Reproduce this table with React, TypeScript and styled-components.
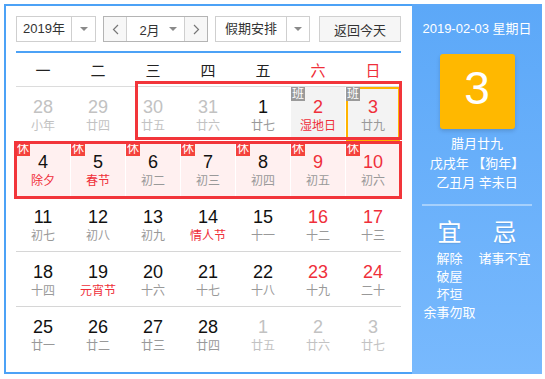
import React from 'react';
import styled, { createGlobalStyle } from 'styled-components';

const Global = createGlobalStyle`
  html, body { margin: 0; padding: 0; background: #fff; }
  body { font-family: "Liberation Sans", "Noto Sans CJK SC", sans-serif; }
`;

const BLUE = '#4ca2f6';
const RED = '#ef2f3a';

const Widget = styled.div`
  display: flex;
  margin: 4px;
  width: 538px;
  height: 370px;
`;

const Main = styled.div`
  box-sizing: border-box;
  width: 408px;
  height: 370px;
  border: 2px solid ${BLUE};
  border-right: none;
  padding: 10px 11px 0 10px;
`;

const Toolbar = styled.div`
  display: flex;
  height: 26px;
  font-size: 13px;
  color: #333;
`;

const Select = styled.div<{ $w: number; $ml: number; $divider?: boolean }>`
  box-sizing: border-box;
  width: ${(p) => p.$w}px;
  margin-left: ${(p) => p.$ml}px;
  border: 1px solid #cfcfcf;
  display: flex;
  background: #fff;
`;

const SelectLabel = styled.div`
  flex: 1;
  display: flex;
  align-items: center;
  justify-content: center;
  line-height: 24px;
`;

const ArrowBox = styled.div<{ $divider?: boolean; $w?: number }>`
  width: ${(p) => p.$w ?? 23}px;
  border-left: ${(p) => (p.$divider ? '1px solid #cfcfcf' : 'none')};
  display: flex;
  align-items: center;
  justify-content: center;
`;

const Triangle = styled.span`
  width: 0;
  height: 0;
  border-left: 4px solid transparent;
  border-right: 4px solid transparent;
  border-top: 4px solid #8a8a8a;
`;

const MonthGroup = styled.div`
  box-sizing: border-box;
  width: 105px;
  margin-left: 7px;
  border: 1px solid #b4b4b4;
  display: flex;
`;

const NavBtn = styled.div<{ $side: 'l' | 'r' }>`
  width: 22px;
  background: #f7f7f7;
  ${(p) => (p.$side === 'l' ? 'border-right: 1px solid #cfcfcf;' : 'border-left: 1px solid #cfcfcf;')}
  display: flex;
  align-items: center;
  justify-content: center;
`;

const MonthSel = styled.div`
  flex: 1;
  display: flex;
  align-items: center;
  padding-left: 10px;
`;

const MonthText = styled.span`
  flex: 1;
  text-align: center;
`;

const ReturnBtn = styled.div`
  box-sizing: border-box;
  width: 82px;
  margin-left: 9px;
  border: 1px solid #d0d0d0;
  background: #f6f6f6;
  display: flex;
  align-items: center;
  justify-content: center;
`;

const BlueLine = styled.div`
  margin-top: 9px;
  height: 2px;
  background: ${BLUE};
`;

const WeekHead = styled.div`
  display: grid;
  grid-template-columns: repeat(7, 54px);
  column-gap: 1px;
  height: 33px;
  align-items: center;
  border-bottom: 1px solid #dcdcdc;
  font-size: 15px;
`;

const WeekName = styled.div<{ $red?: boolean }>`
  text-align: center;
  color: ${(p) => (p.$red ? RED : '#222')};
`;

const Body = styled.div`
  position: relative;
`;

const Row = styled.div<{ $last?: boolean }>`
  display: grid;
  grid-template-columns: repeat(7, 54px);
  column-gap: 1px;
  height: 54px;
  border-bottom: ${(p) => (p.$last ? 'none' : '1px solid #d6d6d6')};
`;

type Kind = 'none' | 'work' | 'rest';

const Cell = styled.div<{ $kind: Kind; $today?: boolean }>`
  position: relative;
  box-sizing: border-box;
  text-align: center;
  padding-top: 10px;
  background: ${(p) => (p.$kind === 'work' ? '#f3f3f3' : p.$kind === 'rest' ? '#fff0f0' : 'transparent')};
  box-shadow: ${(p) => (p.$today ? 'inset 0 0 0 2px #ffb400' : 'none')};
`;

const Num = styled.div<{ $color: string }>`
  font-size: 18px;
  line-height: 20px;
  color: ${(p) => p.$color};
`;

const Lunar = styled.div<{ $color: string }>`
  margin-top: 1px;
  font-size: 12px;
  line-height: 16px;
  color: ${(p) => p.$color};
`;

const Badge = styled.span<{ $rest?: boolean }>`
  position: absolute;
  left: 0;
  top: 0;
  width: 14px;
  height: 14px;
  font-size: 12px;
  line-height: 14px;
  text-align: center;
  color: #fff;
  background: ${(p) => (p.$rest ? '#f4433c' : '#9a9a9a')};
`;

const Mark = styled.div<{ $l: number; $t: number; $w: number; $h: number }>`
  position: absolute;
  box-sizing: border-box;
  left: ${(p) => p.$l}px;
  top: ${(p) => p.$t}px;
  width: ${(p) => p.$w}px;
  height: ${(p) => p.$h}px;
  border: 3px solid #f2353a;
  pointer-events: none;
`;

const Side = styled.div`
  box-sizing: border-box;
  width: 130px;
  height: 370px;
  background: linear-gradient(#5ca8f8, #78b9fd);
  color: #fff;
  display: flex;
  flex-direction: column;
  align-items: center;
  padding-top: 15px;
`;

const DateLine = styled.div`
  font-size: 13px;
  line-height: 20px;
`;

const DayBox = styled.div`
  margin-top: 15px;
  width: 75px;
  height: 75px;
  border-radius: 3px;
  background: #ffb800;
  box-shadow: 0 2px 4px rgba(0, 0, 0, 0.15);
  display: flex;
  align-items: center;
  justify-content: center;
  padding-bottom: 8px;
  box-sizing: border-box;
  font-size: 46px;
`;

const InfoLines = styled.div`
  margin-top: 5px;
  font-size: 13px;
  line-height: 19.5px;
  text-align: center;
`;

const Sep = styled.div`
  margin-top: 11px;
  width: 110px;
  height: 2px;
  background: rgba(255, 255, 255, 0.4);
`;

const YiJi = styled.div`
  margin-top: 13px;
  display: grid;
  grid-template-columns: 55px 55px;
  text-align: center;
`;

const YiJiTitle = styled.div`
  font-size: 24px;
  line-height: 28px;
  text-shadow: 0 1px 1px rgba(0, 0, 0, 0.1);
`;

const YiJiList = styled.div`
  margin-top: 3px;
  font-size: 13px;
  line-height: 18px;
  white-space: nowrap;
`;

const Chevron = ({ dir }: { dir: 'l' | 'r' }) => (
  <svg width="7" height="11" viewBox="0 0 7 11">
    <polyline
      points={dir === 'l' ? '6,1 1.5,5.5 6,10' : '1,1 5.5,5.5 1,10'}
      fill="none"
      stroke="#777"
      strokeWidth="1.2"
    />
  </svg>
);

type Day = {
  n: number;
  l: string;
  other?: boolean;
  red?: boolean;
  fest?: boolean;
  kind?: Kind;
  today?: boolean;
};

const rows: Day[][] = [
  [
    { n: 28, l: '小年', other: true },
    { n: 29, l: '廿四', other: true },
    { n: 30, l: '廿五', other: true },
    { n: 31, l: '廿六', other: true },
    { n: 1, l: '廿七' },
    { n: 2, l: '湿地日', red: true, fest: true, kind: 'work' },
    { n: 3, l: '廿九', red: true, kind: 'work', today: true },
  ],
  [
    { n: 4, l: '除夕', fest: true, kind: 'rest' },
    { n: 5, l: '春节', fest: true, kind: 'rest' },
    { n: 6, l: '初二', kind: 'rest' },
    { n: 7, l: '初三', kind: 'rest' },
    { n: 8, l: '初四', kind: 'rest' },
    { n: 9, l: '初五', red: true, kind: 'rest' },
    { n: 10, l: '初六', red: true, kind: 'rest' },
  ],
  [
    { n: 11, l: '初七' },
    { n: 12, l: '初八' },
    { n: 13, l: '初九' },
    { n: 14, l: '情人节', fest: true },
    { n: 15, l: '十一' },
    { n: 16, l: '十二', red: true },
    { n: 17, l: '十三', red: true },
  ],
  [
    { n: 18, l: '十四' },
    { n: 19, l: '元宵节', fest: true },
    { n: 20, l: '十六' },
    { n: 21, l: '十七' },
    { n: 22, l: '十八' },
    { n: 23, l: '十九', red: true },
    { n: 24, l: '二十', red: true },
  ],
  [
    { n: 25, l: '廿一' },
    { n: 26, l: '廿二' },
    { n: 27, l: '廿三' },
    { n: 28, l: '廿四' },
    { n: 1, l: '廿五', other: true },
    { n: 2, l: '廿六', other: true },
    { n: 3, l: '廿七', other: true },
  ],
];

const weekNames = ['一', '二', '三', '四', '五', '六', '日'];

export default function App() {
  return (
    <>
      <Global />
      <Widget>
        <Main>
          <Toolbar>
            <Select $w={80} $ml={0}>
              <SelectLabel>2019年</SelectLabel>
              <ArrowBox $divider $w={23}>
                <Triangle />
              </ArrowBox>
            </Select>
            <MonthGroup>
              <NavBtn $side="l">
                <Chevron dir="l" />
              </NavBtn>
              <MonthSel>
                <MonthText>2月</MonthText>
                <ArrowBox $w={22}>
                  <Triangle />
                </ArrowBox>
              </MonthSel>
              <NavBtn $side="r">
                <Chevron dir="r" />
              </NavBtn>
            </MonthGroup>
            <Select $w={95} $ml={7}>
              <SelectLabel>假期安排</SelectLabel>
              <ArrowBox $divider $w={22}>
                <Triangle />
              </ArrowBox>
            </Select>
            <ReturnBtn>返回今天</ReturnBtn>
          </Toolbar>
          <BlueLine />
          <WeekHead>
            {weekNames.map((w, i) => (
              <WeekName key={w} $red={i >= 5}>
                {w}
              </WeekName>
            ))}
          </WeekHead>
          <Body>
            {rows.map((r, ri) => (
              <Row key={ri} $last={ri === rows.length - 1}>
                {r.map((d, ci) => {
                  const numColor = d.other ? '#c2c2c2' : d.red ? RED : '#111';
                  const lunColor = d.other ? '#c2c2c2' : d.fest ? RED : '#999';
                  return (
                    <Cell key={ci} $kind={d.kind ?? 'none'} $today={d.today}>
                      {d.kind === 'work' && <Badge>班</Badge>}
                      {d.kind === 'rest' && <Badge $rest>休</Badge>}
                      <Num $color={numColor}>{d.n}</Num>
                      <Lunar $color={lunColor}>{d.l}</Lunar>
                    </Cell>
                  );
                })}
              </Row>
            ))}
            <Mark $l={119} $t={-6} $w={267} $h={59} />
            <Mark $l={-2} $t={54} $w={388} $h={58} />
          </Body>
        </Main>
        <Side>
          <DateLine>2019-02-03 星期日</DateLine>
          <DayBox>3</DayBox>
          <InfoLines>
            <div>腊月廿九</div>
            <div>戊戌年 【狗年】</div>
            <div>乙丑月 辛未日</div>
          </InfoLines>
          <Sep />
          <YiJi>
            <div>
              <YiJiTitle>宜</YiJiTitle>
              <YiJiList>
                <div>解除</div>
                <div>破屋</div>
                <div>坏垣</div>
                <div>余事勿取</div>
              </YiJiList>
            </div>
            <div>
              <YiJiTitle>忌</YiJiTitle>
              <YiJiList>
                <div>诸事不宜</div>
              </YiJiList>
            </div>
          </YiJi>
        </Side>
      </Widget>
    </>
  );
}
